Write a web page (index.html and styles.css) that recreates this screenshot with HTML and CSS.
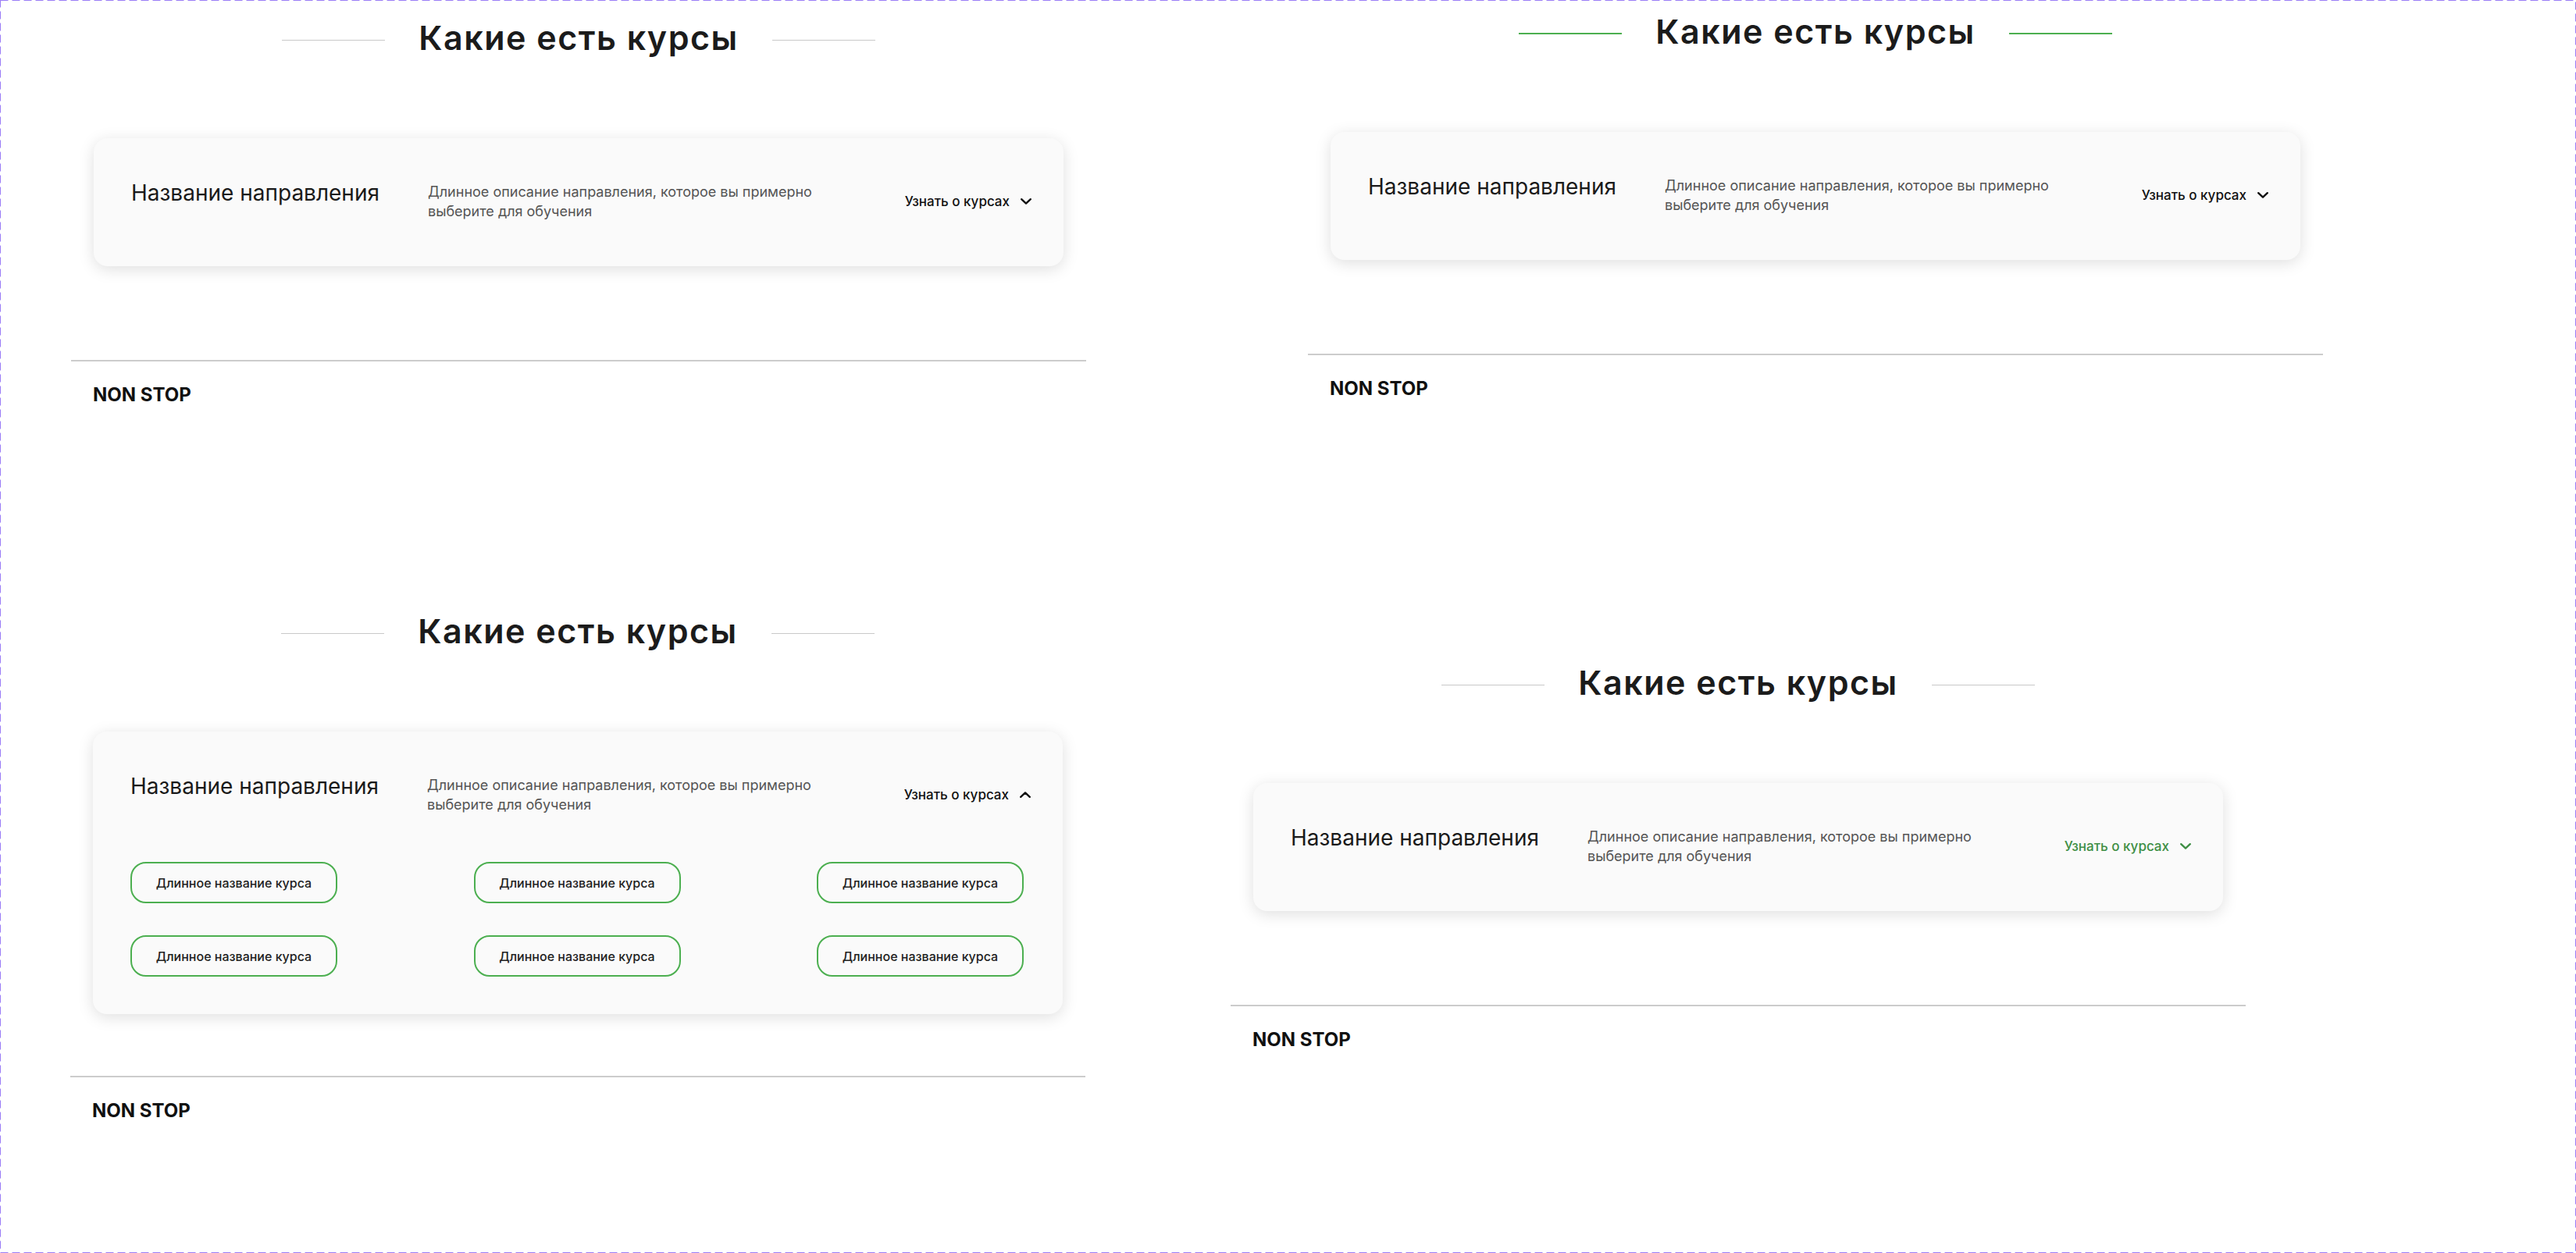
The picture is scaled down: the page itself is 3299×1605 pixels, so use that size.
FILE: index.html
```html
<!DOCTYPE html>
<html lang="ru">
<head>
<meta charset="utf-8">
<title>Какие есть курсы</title>
<link rel="stylesheet" href="styles.css">
</head>
<body>
<svg class="set-border" xmlns="http://www.w3.org/2000/svg" width="3299" height="1605"><rect x="0.5" y="0.5" width="3298" height="1604"/></svg>

<section class="variant v-tl">
  <div class="heading"><span class="heading-line"></span><h2 class="heading-title">Какие есть курсы</h2><span class="heading-line"></span></div>
  <div class="card">
    <div class="card-head">
      <h3 class="card-title">Название направления</h3>
      <p class="card-desc">Длинное описание направления, которое вы примерно выберите для обучения</p>
      <button class="card-toggle">Узнать о курсах<svg class="chev" viewBox="0 0 14 8"><path d="M1.2 1.2L7 6.6l5.8-5.4"/></svg></button>
    </div>
  </div>
  <div class="divider"></div>
  <div class="brand">NON STOP</div>
</section>

<section class="variant v-tr">
  <div class="heading heading-accent"><span class="heading-line"></span><h2 class="heading-title">Какие есть курсы</h2><span class="heading-line"></span></div>
  <div class="card">
    <div class="card-head">
      <h3 class="card-title">Название направления</h3>
      <p class="card-desc">Длинное описание направления, которое вы примерно выберите для обучения</p>
      <button class="card-toggle">Узнать о курсах<svg class="chev" viewBox="0 0 14 8"><path d="M1.2 1.2L7 6.6l5.8-5.4"/></svg></button>
    </div>
  </div>
  <div class="divider"></div>
  <div class="brand">NON STOP</div>
</section>

<section class="variant v-bl">
  <div class="heading"><span class="heading-line"></span><h2 class="heading-title">Какие есть курсы</h2><span class="heading-line"></span></div>
  <div class="card card-open">
    <div class="card-head">
      <h3 class="card-title">Название направления</h3>
      <p class="card-desc">Длинное описание направления, которое вы примерно выберите для обучения</p>
      <button class="card-toggle">Узнать о курсах<svg class="chev" viewBox="0 0 14 8"><path d="M1.2 6.8L7 1.4l5.8 5.4"/></svg></button>
    </div>
    <div class="courses">
      <a class="course">Длинное название курса</a>
      <a class="course">Длинное название курса</a>
      <a class="course">Длинное название курса</a>
      <a class="course">Длинное название курса</a>
      <a class="course">Длинное название курса</a>
      <a class="course">Длинное название курса</a>
    </div>
  </div>
  <div class="divider divider-open"></div>
  <div class="brand">NON STOP</div>
</section>

<section class="variant v-br">
  <div class="heading"><span class="heading-line"></span><h2 class="heading-title">Какие есть курсы</h2><span class="heading-line"></span></div>
  <div class="card">
    <div class="card-head">
      <h3 class="card-title">Название направления</h3>
      <p class="card-desc">Длинное описание направления, которое вы примерно выберите для обучения</p>
      <button class="card-toggle card-toggle-hover">Узнать о курсах<svg class="chev" viewBox="0 0 14 8"><path d="M1.2 1.2L7 6.6l5.8-5.4"/></svg></button>
    </div>
  </div>
  <div class="divider"></div>
  <div class="brand">NON STOP</div>
</section>
</body>
</html>
```

FILE: styles.css
```css
html, body {
  margin: 0;
  padding: 0;
}
body {
  width: 3299px;
  height: 1605px;
  position: relative;
  overflow: hidden;
  background: #ffffff;
  font-family: Inter, "Noto Sans", sans-serif;
  color: #1a1a1a;
}

.set-border {
  position: absolute;
  left: 0;
  top: 0;
  pointer-events: none;
}
.set-border rect {
  fill: none;
  stroke: #9a7cf6;
  stroke-width: 1;
  stroke-dasharray: 10 5;
}

/* variants placed on the component-set canvas */
.variant {
  position: absolute;
  width: 1300px;
  padding-top: 23px;
}
.v-tl { left: 91px; top: 0; }
.v-tr { left: 1675px; top: -8px; }
.v-bl { left: 90px; top: 760px; }
.v-br { left: 1576px; top: 826px; }

.heading {
  display: flex;
  justify-content: center;
  align-items: flex-start;
  gap: 43px;
  height: 50px;
}
.heading-line {
  width: 132px;
  height: 1px;
  margin-top: 28px;
  background: #c9c9c9;
}
.heading-accent .heading-line {
  height: 2px;
  margin-top: 27px;
  background: #4caf50;
}
.heading-title {
  margin: 0;
  font-family: Inter, "Noto Sans", sans-serif;
  font-weight: 600;
  font-size: 43px;
  line-height: 50px;
  letter-spacing: 1.5px;
  color: #1b1b1b;
  white-space: nowrap;
}

.card {
  margin: 104px 29px 0;
  padding: 56px 41px 58px 48px;
  background: #fafafa;
  border-radius: 18px;
  box-shadow: 0 4px 20px rgba(0, 0, 0, 0.13);
}
.card-open {
  padding-bottom: 48px;
}
.card-head {
  display: flex;
  align-items: flex-start;
}
.card-title {
  margin: 0;
  width: 380px;
  flex: none;
  font-weight: 400;
  font-size: 28px;
  line-height: 28px;
  color: #1a1a1a;
  white-space: nowrap;
}
.card-desc {
  margin: 0;
  width: 500px;
  font-size: 18px;
  line-height: 25px;
  color: #555555;
}
.card-toggle {
  margin-left: auto;
  align-self: center;
  display: flex;
  align-items: center;
  gap: 14px;
  padding: 0;
  border: 0;
  background: none;
  font-family: Inter, "Noto Sans", sans-serif;
  font-weight: 500;
  font-size: 17px;
  line-height: 20px;
  color: #111111;
  cursor: pointer;
}
.chev {
  width: 14px;
  height: 8px;
  fill: none;
  stroke: currentColor;
  stroke-width: 2.4;
  stroke-linecap: round;
  stroke-linejoin: round;
}
.card-toggle-hover {
  color: #3f8f45;
}

.courses {
  margin-top: 61px;
  padding-right: 9px;
  display: grid;
  grid-template-columns: repeat(3, 265px);
  justify-content: space-between;
  row-gap: 41px;
}
.course {
  box-sizing: border-box;
  height: 53px;
  display: flex;
  align-items: center;
  justify-content: center;
  border: 2px solid #4caf50;
  border-radius: 20px;
  font-weight: 500;
  font-size: 16px;
  color: #222222;
  white-space: nowrap;
}

.divider {
  margin-top: 120px;
  height: 2px;
  background: #cccccc;
}
.divider-open {
  margin-top: 79px;
}
.brand {
  margin-top: 28px;
  padding-left: 28px;
  font-weight: 700;
  font-size: 24px;
  line-height: 29px;
  color: #111111;
}
```
